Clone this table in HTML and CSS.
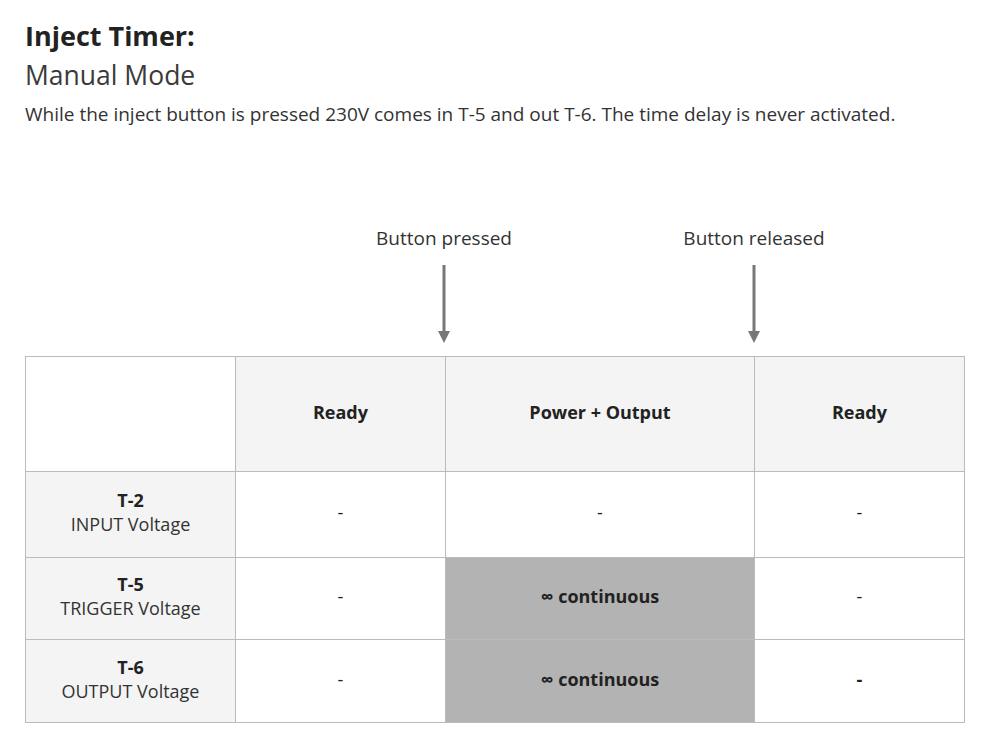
FILE: index.html
```html
<!DOCTYPE html>
<html>
<head>
<meta charset="utf-8">
<link rel="stylesheet" href="styles.css">
</head>
<body>
<div class="page">
  <h1 class="title">Inject Timer:</h1>
  <h2 class="subtitle">Manual Mode</h2>
  <p class="desc">While the inject button is pressed 230V comes in T-5 and out T-6. The time delay is never activated.</p>

  <div class="markers">
    <div class="marker">
      <span class="marker-label">Button pressed</span>
      <svg class="arrow" width="14" height="78" viewBox="0 0 14 78"><line x1="7" y1="0" x2="7" y2="68" stroke="#777" stroke-width="3"/><polygon points="1,66 13,66 7,78" fill="#777"/></svg>
    </div>
    <div class="marker">
      <span class="marker-label">Button released</span>
      <svg class="arrow" width="14" height="78" viewBox="0 0 14 78"><line x1="7" y1="0" x2="7" y2="68" stroke="#777" stroke-width="3"/><polygon points="1,66 13,66 7,78" fill="#777"/></svg>
    </div>
  </div>

  <table class="timing">
    <colgroup>
      <col class="c1"><col class="c2"><col class="c3"><col class="c4">
    </colgroup>
    <thead>
      <tr class="head">
        <th class="blank"></th>
        <th>Ready</th>
        <th>Power + Output</th>
        <th>Ready</th>
      </tr>
    </thead>
    <tbody>
      <tr class="r1">
        <th class="rowhead"><b>T-2</b><br>INPUT Voltage</th>
        <td>-</td>
        <td>-</td>
        <td>-</td>
      </tr>
      <tr class="r2">
        <th class="rowhead"><b>T-5</b><br>TRIGGER Voltage</th>
        <td>-</td>
        <td class="on">∞ continuous</td>
        <td>-</td>
      </tr>
      <tr class="r3">
        <th class="rowhead"><b>T-6</b><br>OUTPUT Voltage</th>
        <td>-</td>
        <td class="on">∞ continuous</td>
        <td class="strong">-</td>
      </tr>
    </tbody>
  </table>
</div>
</body>
</html>
```

FILE: styles.css
```css
html, body {
  margin: 0;
  padding: 0;
  background: #fff;
}
body {
  font-family: "Open Sans", "Liberation Sans", sans-serif;
  color: #333;
}
.page {
  padding: 20px 23px 0 25px;
}
.title {
  margin: 0;
  font-size: 27px;
  line-height: 32px;
  font-weight: 700;
  color: #222;
}
.subtitle {
  margin: 6px 0 0 0;
  font-size: 26.5px;
  line-height: 34px;
  font-weight: 400;
  color: #3a3a3a;
}
.desc {
  margin: 9px 0 0 0;
  font-size: 19px;
  line-height: 26px;
}
.markers {
  display: flex;
  margin-top: 99px;
  padding-left: 419px;
  gap: 310px;
  height: 130px;
}
.marker {
  width: 0;
  display: flex;
  flex-direction: column;
  align-items: center;
}
.marker-label {
  white-space: nowrap;
  font-size: 19px;
  line-height: 24px;
  color: #333;
}
.arrow {
  display: block;
  margin-top: 15px;
  flex: none;
}
.timing {
  border-collapse: collapse;
  table-layout: fixed;
  width: 939px;
  font-size: 18px;
  color: #222;
}
.c1, .c2, .c4 { width: 210px; }
.c3 { width: 309px; }
.timing th, .timing td {
  border: 1px solid #bbb;
  text-align: center;
  vertical-align: middle;
  padding: 0 0 5px 0;
}
.head th {
  background: #f4f4f4;
  height: 109px;
  font-weight: 700;
}
.head th.blank {
  background: #fff;
}
.rowhead {
  background: #f4f4f4;
  font-weight: 400;
  line-height: 24px;
  color: #333;
}
.rowhead b {
  color: #222;
}
.r1 th, .r1 td { height: 80px; }
.r2 th, .r2 td { height: 76px; }
.r3 th, .r3 td { height: 77px; }
.timing td {
  font-weight: 400;
  background: #fff;
}
.timing td.on {
  background: #b3b3b3;
  font-weight: 700;
}
.timing td.strong {
  font-weight: 700;
}
```
